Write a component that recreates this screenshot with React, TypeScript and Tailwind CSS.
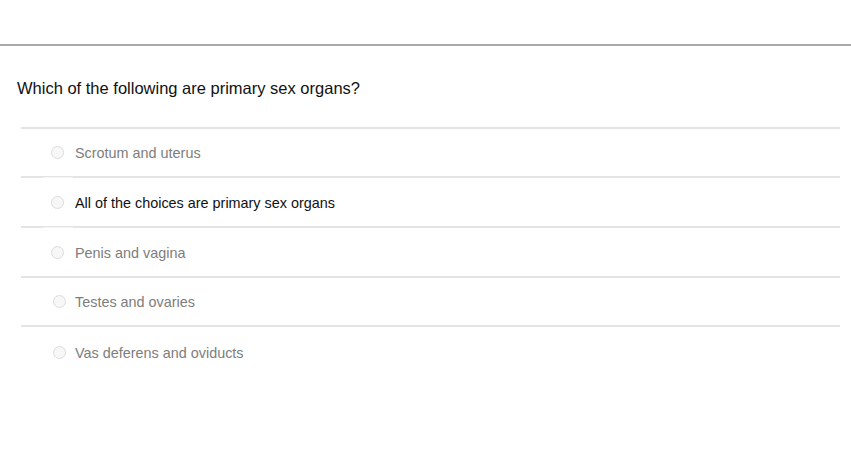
import React from "react";

const options = [
  { text: "Scrotum and uterus", dark: false, h: "h-[47px]", shift: false },
  { text: "All of the choices are primary sex organs", dark: true, h: "h-[48px]", shift: false },
  { text: "Penis and vagina", dark: false, h: "h-[48px]", shift: false },
  { text: "Testes and ovaries", dark: false, h: "h-[47px]", shift: true },
  { text: "Vas deferens and oviducts", dark: false, h: "h-[50px]", shift: true },
];

function Separator({ gap }: { gap: boolean }) {
  return (
    <div className="flex flex-col">
      <div className="h-px bg-[#e4e4e4]" />
      {gap ? (
        <div className="flex h-px">
          <div className="w-[22px] bg-[#e4e4e4]" />
          <div className="w-[30px] bg-[#f4f4f4]" />
          <div className="flex-1 bg-[#e4e4e4]" />
        </div>
      ) : (
        <div className="h-px bg-[#e4e4e4]" />
      )}
    </div>
  );
}

export default function App() {
  return (
    <div
      className="w-[851px] h-[467px] bg-white"
      style={{ fontFamily: '"Liberation Sans", Arial, sans-serif' }}
    >
      <div className="h-[44px]" />
      <div className="h-[2px] bg-[#a9a9a9]" />
      <div className="pl-[17px] pt-[32px] h-[81px]">
        <div className="text-[16.5px] leading-[20px] text-[#111]">
          Which of the following are primary sex organs?
        </div>
      </div>
      <div className="ml-[21px] w-[819px]">
        {options.map((o, i) => (
          <div key={i}>
            <Separator gap={i > 0 && i < 3} />
            <div className={`flex items-center ${o.h}`}>
              <div
                className={`${
                  o.shift ? "ml-[32px] mr-[9px]" : "ml-[30px] mr-[11px]"
                } w-[13px] h-[13px] rounded-full border border-[#dcdcdc] bg-[#f7f7f7]`}
              />
              <div
                className={`pt-[1px] text-[14.4px] leading-[18px] ${
                  o.dark ? "text-[#111]" : "text-[#7d7d7d]"
                }`}
              >
                {o.text}
              </div>
            </div>
          </div>
        ))}
      </div>
    </div>
  );
}
